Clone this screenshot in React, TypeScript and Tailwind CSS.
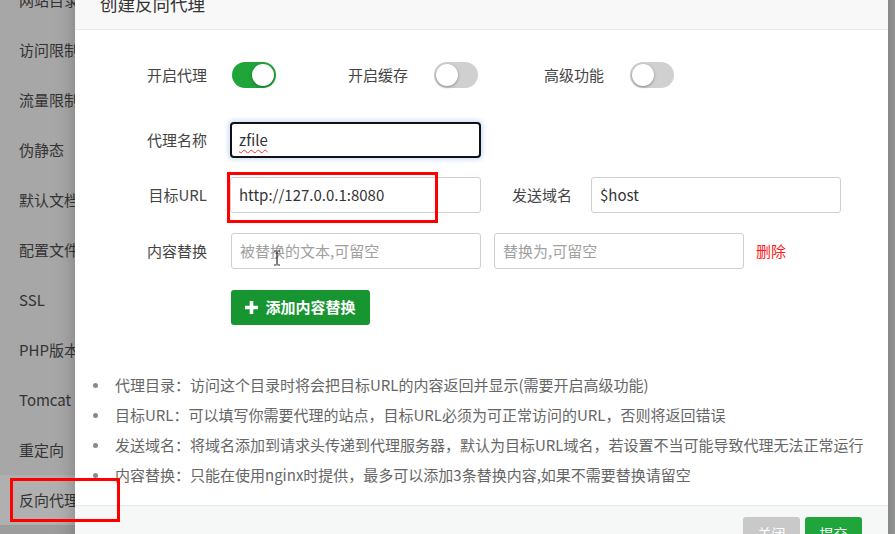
const sideItems = [
  "网站目录",
  "访问限制",
  "流量限制",
  "伪静态",
  "默认文档",
  "配置文件",
  "SSL",
  "PHP版本",
  "Tomcat",
  "重定向",
  "反向代理",
];

const tips = [
  "代理目录：访问这个目录时将会把目标URL的内容返回并显示(需要开启高级功能)",
  "目标URL：可以填写你需要代理的站点，目标URL必须为可正常访问的URL，否则将返回错误",
  "发送域名：将域名添加到请求头传递到代理服务器，默认为目标URL域名，若设置不当可能导致代理无法正常运行",
  "内容替换：只能在使用nginx时提供，最多可以添加3条替换内容,如果不需要替换请留空",
];

const font = { fontFamily: '"Microsoft YaHei", "Noto Sans CJK SC", "Noto Sans", sans-serif' };

const Toggle = ({ on }: { on: boolean }) => (
  <div
    className={`relative w-[44px] h-[26px] rounded-full shrink-0 ${
      on ? "bg-[#20a53a]" : "bg-[#d0d0d0]"
    }`}
  >
    <div
      className={`absolute top-[2px] w-[22px] h-[22px] rounded-full bg-white shadow-[0_1px_3px_rgba(0,0,0,0.35)] ${
        on ? "left-[20px]" : "left-[2px]"
      }`}
    />
  </div>
);

const Field = ({ children, w = "w-[251px]" }: { children: React.ReactNode; w?: string }) => (
  <div
    className={`${w} h-[36px] flex items-center px-[8px] text-[15px] text-[#333] bg-white border border-[#cfcfcf] rounded-[3px]`}
  >
    {children}
  </div>
);

export default function App() {
  return (
    <div className="relative w-[895px] h-[534px] overflow-hidden bg-[#9c9c9c]" style={font}>
      {/* sidebar behind the mask */}
      <div className="w-[140px] bg-[#a7a7a7] -mt-[25px]">
        {sideItems.map((s, i) => (
          <div
            key={s}
            className={`h-[50px] flex items-center pl-[19px] text-[15px] text-[#333] ${
              i === sideItems.length - 1 ? "bg-[#b0b0b0]" : ""
            }`}
          >
            {s}
          </div>
        ))}
      </div>

      {/* dialog */}
      <div className="absolute left-[75px] top-[-20px] w-[813px] h-[590px] bg-white flex flex-col shadow-[0_0_18px_rgba(0,0,0,0.25)]">
        <div className="h-[50px] shrink-0 flex items-center pl-[25px] bg-[#f8f8f8] border-b border-[#e8e8e8] text-[17.5px] text-[#333]">
          创建反向代理
        </div>

        <div className="flex-1 flex flex-col text-[15px] text-[#444]">
          {/* switches */}
          <div className="h-[36px] mt-[27px] flex items-center">
            <div className="w-[132px] text-right">开启代理</div>
            <div className="ml-[25px]">
              <Toggle on />
            </div>
            <div className="w-[132px] text-right">开启缓存</div>
            <div className="ml-[26px]">
              <Toggle on={false} />
            </div>
            <div className="w-[126px] text-right">高级功能</div>
            <div className="ml-[26px]">
              <Toggle on={false} />
            </div>
          </div>

          <div className="h-[36px] mt-[29px] flex items-center">
            <div className="w-[132px] text-right">代理名称</div>
            <div className="ml-[23px] w-[251px] h-[36px] flex items-center px-[7px] text-[15px] text-[#333] bg-white border-2 border-[#111] rounded-[4px] shadow-[0_0_4px_2px_rgba(120,170,230,0.35)]">
              <span className="underline decoration-wavy decoration-[#e33] decoration-1 underline-offset-[3px]">zfile</span>
            </div>
          </div>

          <div className="h-[36px] mt-[19px] flex items-center">
            <div className="w-[132px] text-right">目标URL</div>
            <div className="ml-[23px]">
              <Field>http://127.0.0.1:8080</Field>
            </div>
            <div className="w-[91px] text-right">发送域名</div>
            <div className="ml-[19px]">
              <Field w="w-[250px]">$host</Field>
            </div>
          </div>

          <div className="h-[36px] mt-[20px] flex items-center">
            <div className="w-[132px] text-right">内容替换</div>
            <div className="ml-[24px]">
              <Field w="w-[250px]">
                <span className="text-[#a0a0a0]">被替换的文本,可留空</span>
              </Field>
            </div>
            <div className="ml-[13px]">
              <Field w="w-[250px]">
                <span className="text-[#a0a0a0]">替换为,可留空</span>
              </Field>
            </div>
            <span className="ml-[12px] text-[#ff1a1a]">删除</span>
          </div>

          <div className="mt-[21px] ml-[156px]">
            <button className="h-[35px] w-[139px] flex items-center justify-center gap-[7px] rounded-[3px] bg-[#179530] text-white text-[15px] font-bold">
              <svg width="13" height="13" viewBox="0 0 13 13">
                <path d="M4.7 0h3.6v4.7H13v3.6H8.3V13H4.7V8.3H0V4.7h4.7z" fill="#fff" />
              </svg>
              添加内容替换
            </button>
          </div>

          <ul className="mt-[45px] flex flex-col text-[15px] text-[#666]">
            {tips.map((t) => (
              <li key={t} className="h-[30px] flex items-center">
                <span className="ml-[18px] w-[5px] h-[5px] rounded-full bg-[#8a8a8a] shrink-0" />
                <span className="ml-[17px] whitespace-nowrap">{t}</span>
              </li>
            ))}
          </ul>
        </div>

        <div className="h-[65px] shrink-0 bg-[#f6f8f8] border-t border-[#e6eaea] flex justify-end pt-[11px] pr-[26px] gap-[5px]">
          <button className="h-[32px] w-[57px] rounded-[3px] bg-[#c9c9c9] text-white text-[14px]">关闭</button>
          <button className="h-[32px] w-[57px] rounded-[3px] bg-[#20a53a] text-white text-[14px]">提交</button>
        </div>
      </div>

      {/* text cursor */}
      <svg className="absolute left-[273px] top-[250px]" width="8" height="16" viewBox="0 0 8 16">
        <path d="M1 1h2.5M4.5 1H7M4 1.5v13M1 15h2.5M4.5 15H7" stroke="#222" strokeWidth="1.2" fill="none" />
      </svg>

      {/* annotations */}
      <div className="absolute left-[227px] top-[172px] w-[211px] h-[51px] border-[3px] border-[#ff0000]" />
      <div className="absolute left-[10px] top-[478px] w-[110px] h-[44px] border-[3px] border-[#ff0000]" />
    </div>
  );
}
